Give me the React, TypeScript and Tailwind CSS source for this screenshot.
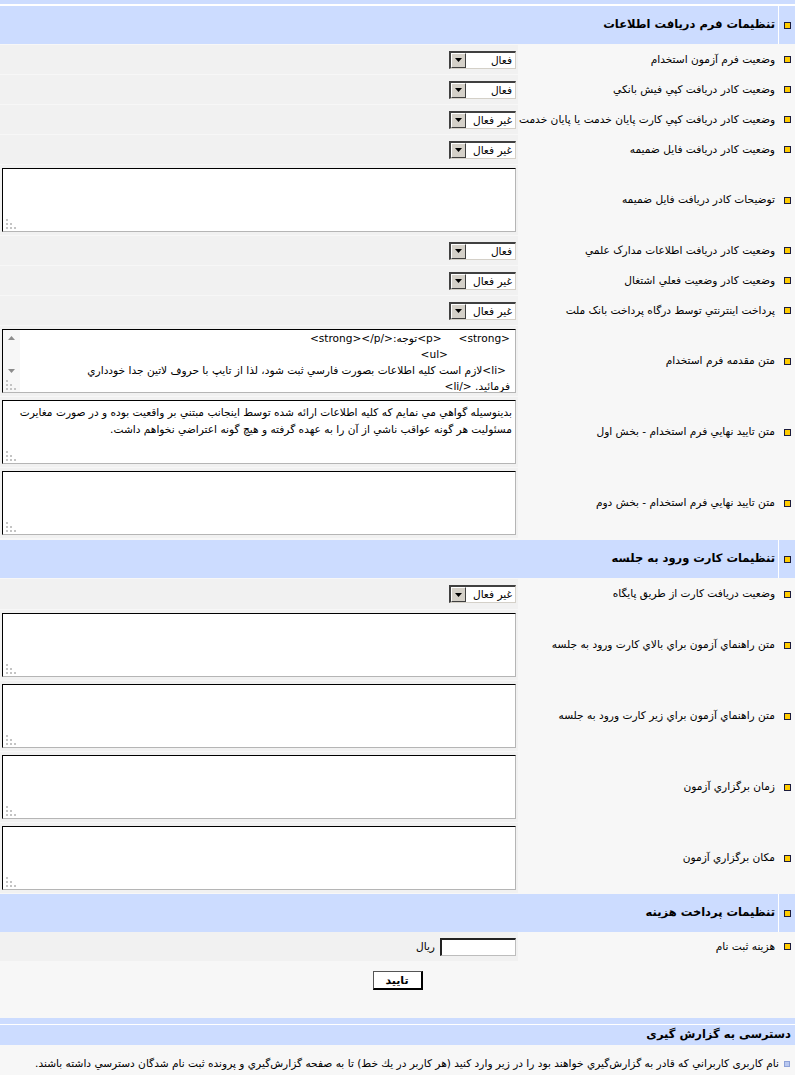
import type { ReactNode } from "react";

const headerBg = "bg-[#ccdcff]";

function Bullet() {
  return <span className="block h-[7px] w-[7px] border border-[#1c1c3c] bg-[#ffcc00]" />;
}

function SectionHeader({ title }: { title: string }) {
  return (
    <div className={`flex h-[38px] ${headerBg}`}>
      <div className="flex w-[16px] shrink-0 items-center justify-center">
        <Bullet />
      </div>
      <div className="w-px shrink-0 bg-white" />
      <div className="flex flex-1 items-center pr-[3px] text-[11.5px] font-bold">{title}</div>
    </div>
  );
}

function Row({ label, height = "h-[29px]", children }: { label: string; height?: string; children: ReactNode }) {
  return (
    <div className={`mb-px flex ${height}`}>
      <div className="flex w-[16px] shrink-0 items-center justify-center">
        <Bullet />
      </div>
      <div className="flex w-[261px] shrink-0 items-center pr-[4px] whitespace-nowrap">{label}</div>
      <div className="flex flex-1 items-center bg-[#f1f1f1] pr-[2px]">{children}</div>
    </div>
  );
}

function Combo({ value }: { value: string }) {
  return (
    <div className="flex h-[18px] w-[67px] border-t-2 border-l-2 border-t-[#404040] border-l-[#404040] border-b border-r border-b-[#d4d0c8] border-r-[#d4d0c8] bg-white">
      <span className="flex-1 pr-[3px] leading-[15px] whitespace-nowrap">{value}</span>
      <span className="flex w-[15px] items-center justify-center border border-t-white border-l-white border-b-[#404040] border-r-[#404040] bg-[#d4d0c8]">
        <svg width="7" height="4" viewBox="0 0 7 4">
          <path d="M0 0h7L3.5 4z" fill="#000" />
        </svg>
      </span>
    </div>
  );
}

function Grip() {
  return (
    <svg className="absolute bottom-[2px] left-[2px]" width="12" height="12" viewBox="0 0 12 12">
      <g fill="#c4c4c4">
        <rect x="1" y="2" width="2" height="2" />
        <rect x="1" y="6" width="2" height="2" />
        <rect x="5" y="6" width="2" height="2" />
        <rect x="1" y="10" width="2" height="2" />
        <rect x="5" y="10" width="2" height="2" />
        <rect x="9" y="10" width="2" height="2" />
      </g>
    </svg>
  );
}

function TextBox({ children }: { children?: ReactNode }) {
  return (
    <div className="relative h-[64px] w-[514px] overflow-hidden border border-t-black border-l-black border-b-[#b5b5b5] border-r-[#b5b5b5] bg-white">
      {children}
      <Grip />
    </div>
  );
}

function Arrow({ up }: { up?: boolean }) {
  return (
    <svg width="7" height="4" viewBox="0 0 7 4">
      <path d={up ? "M0 4h7L3.5 0z" : "M0 0h7L3.5 4z"} fill="#8c8c8c" />
    </svg>
  );
}

function IntroText() {
  return (
    <div className="flex h-full leading-[16px]">
      <div className="flex-1">
        <div className="pr-[5px] whitespace-pre">{"<p>     <strong>توجه:</strong></p>"}</div>
        <div className="pr-[67px]">{"<ul>"}</div>
        <div className="overflow-hidden pr-[9px] whitespace-nowrap">
          {"<li>لازم است كليه اطلاعات بصورت فارسي ثبت شود، لذا از تايپ با حروف لاتين جدا خودداري"}
        </div>
        <div className="pr-[5px]">{"فرمائيد. </li>"}</div>
      </div>
      <div className="flex w-[17px] shrink-0 flex-col items-center bg-[#f7f7f7] pt-[6px]">
        <Arrow up />
        <div className="h-[29px]" />
        <Arrow />
      </div>
    </div>
  );
}

function ConfirmText() {
  return (
    <div className="pt-[3px] pr-[3px] leading-[17px]">
      <div className="overflow-hidden whitespace-nowrap">
        بدينوسيله گواهي مي نمايم كه كليه اطلاعات ارائه شده توسط اينجانب مبتني بر واقعيت بوده و در صورت مغايرت
      </div>
      <div className="whitespace-nowrap">
        مسئوليت هر گونه عواقب ناشي از آن را به عهده گرفته و هيچ گونه اعتراضي نخواهم داشت.
      </div>
    </div>
  );
}

export default function App() {
  return (
    <div
      dir="rtl"
      className="min-h-[1075px] w-[795px] bg-[#f7f7f7] font-['DejaVu_Sans',sans-serif] text-[10.6px] text-black"
    >
      <div className={`h-[4px] ${headerBg}`} />
      <div className="h-[2px] bg-white" />

      <SectionHeader title="تنظیمات فرم دریافت اطلاعات" />
      <div className="h-px" />
      <Row label="وضعیت فرم آزمون استخدام">
        <Combo value="فعال" />
      </Row>
      <Row label="وضعیت کادر دریافت کپي فیش بانکي">
        <Combo value="فعال" />
      </Row>
      <Row label="وضعیت کادر دریافت کپي کارت پایان خدمت یا پایان خدمت">
        <Combo value="غیر فعال" />
      </Row>
      <Row label="وضعیت کادر دریافت فایل ضمیمه">
        <Combo value="غیر فعال" />
      </Row>
      <Row label="توضیحات کادر دریافت فایل ضمیمه" height="h-[70px]">
        <TextBox />
      </Row>
      <Row label="وضعیت کادر دریافت اطلاعات مدارک علمي">
        <Combo value="فعال" />
      </Row>
      <Row label="وضعیت کادر وضعیت فعلي اشتغال">
        <Combo value="غیر فعال" />
      </Row>
      <Row label="پرداخت اینترنتي توسط درگاه پرداخت بانک ملت">
        <Combo value="غیر فعال" />
      </Row>
      <Row label="متن مقدمه فرم استخدام" height="h-[70px]">
        <TextBox>
          <IntroText />
        </TextBox>
      </Row>
      <Row label="متن تایید نهایي فرم استخدام - بخش اول" height="h-[70px]">
        <TextBox>
          <ConfirmText />
        </TextBox>
      </Row>
      <Row label="متن تایید نهایي فرم استخدام - بخش دوم" height="h-[70px]">
        <TextBox />
      </Row>

      <div className="h-px" />
      <SectionHeader title="تنظیمات کارت ورود به جلسه" />
      <div className="h-px" />
      <Row label="وضعیت دریافت کارت از طریق پایگاه" height="h-[30px]">
        <Combo value="غیر فعال" />
      </Row>
      <Row label="متن راهنماي آزمون براي بالاي کارت ورود به جلسه" height="h-[70px]">
        <TextBox />
      </Row>
      <Row label="متن راهنماي آزمون براي زير کارت ورود به جلسه" height="h-[70px]">
        <TextBox />
      </Row>
      <Row label="زمان برگزاري آزمون" height="h-[70px]">
        <TextBox />
      </Row>
      <Row label="مکان برگزاري آزمون" height="h-[70px]">
        <TextBox />
      </Row>

      <SectionHeader title="تنظیمات پرداخت هزینه" />
      <Row label="هزینه ثبت نام">
        <div className="flex items-center gap-[5px]">
          <div className="h-[18px] w-[76px] border-t-2 border-l-2 border-t-[#222] border-l-[#222] border-b border-r border-b-[#bdbdbd] border-r-[#bdbdbd] bg-white" />
          <span>ريال</span>
        </div>
      </Row>

      <div className="flex h-[56px] justify-center pt-[9px]">
        <button
          type="button"
          className="h-[19px] w-[50px] border border-t-[#555] border-l-[#555] border-b-2 border-r-2 border-b-black border-r-black bg-white text-[11px] leading-none font-bold"
        >
          تایید
        </button>
      </div>

      <div className={`h-[6px] ${headerBg}`} />
      <div className="h-px bg-white" />
      <div className={`flex h-[20px] items-center pr-[4px] text-[11.5px] font-bold ${headerBg}`}>
        دسترسی به گزارش گیری
      </div>

      <div className="flex items-center gap-[5px] pt-[11px] pr-[5px]">
        <span className="block h-[6px] w-[6px] border border-[#8ea2d8] bg-[#b9c8f0]" />
        <span className="whitespace-nowrap">
          نام کاربری کاربراني که قادر به گزارش‌گیري خواهند بود را در زیر وارد کنید (هر کاربر در یك خط) تا به صفحه گزارش‌گیري و پرونده ثبت نام شدگان دسترسي داشته باشند.
        </span>
      </div>
    </div>
  );
}
